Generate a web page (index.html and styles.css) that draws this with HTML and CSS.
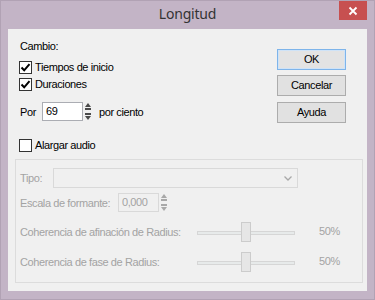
FILE: index.html
```html
<!DOCTYPE html>
<html lang="es">
<head>
<meta charset="utf-8">
<title>Longitud</title>
<link rel="stylesheet" href="styles.css">
</head>
<body>
<div class="window">
  <div class="titlebar">
    <span></span>
    <span class="title">Longitud</span>
    <div class="close">
      <svg width="10" height="10" viewBox="0 0 10 10"><path d="M1.5 1.5 L8.5 8.5 M8.5 1.5 L1.5 8.5" stroke="#fff" stroke-width="1.8" fill="none"/></svg>
    </div>
  </div>
  <div class="client">
    <div class="top">
      <div class="left">
        <div class="caption">Cambio:</div>
        <div class="check row1"><span class="box"><svg width="11" height="11" viewBox="0 0 11 11"><path d="M1.5 5.5 L4.2 8.3 L9.5 2.2" stroke="#000" stroke-width="2" fill="none"/></svg></span><span>Tiempos de inicio</span></div>
        <div class="check row2"><span class="box"><svg width="11" height="11" viewBox="0 0 11 11"><path d="M1.5 5.5 L4.2 8.3 L9.5 2.2" stroke="#000" stroke-width="2" fill="none"/></svg></span><span>Duraciones</span></div>
        <div class="por">
          <span class="por-label">Por</span>
          <span class="input">69</span>
          <span class="spin"><svg width="8" height="19" viewBox="0 0 8 19"><path d="M4 1 L7 5 L1 5 Z" fill="#4a4a4a"/><rect x="1" y="6" width="6" height="2" fill="#4a4a4a"/><rect x="1" y="11" width="6" height="2" fill="#4a4a4a"/><path d="M1 14 L7 14 L4 18 Z" fill="#4a4a4a"/></svg></span>
          <span class="por-suffix">por ciento</span>
        </div>
        <div class="check row3"><span class="box"></span><span>Alargar audio</span></div>
      </div>
      <div class="buttons">
        <div class="btn default">OK</div>
        <div class="btn">Cancelar</div>
        <div class="btn third">Ayuda</div>
      </div>
    </div>
    <div class="group">
      <div class="row tipo">
        <span class="lbl tipo-lbl">Tipo:</span>
        <span class="select"><svg width="8" height="5" viewBox="0 0 8 5"><path d="M0.5 0.5 L4 4 L7.5 0.5" stroke="#a8a8a8" stroke-width="1.3" fill="none"/></svg></span>
      </div>
      <div class="row escala">
        <span class="lbl escala-lbl">Escala de formante:</span>
        <span class="input disabled">0,000</span>
        <span class="spin"><svg width="8" height="19" viewBox="0 0 8 19"><path d="M4 1 L7 5 L1 5 Z" fill="#a8a8a8"/><rect x="1" y="6" width="6" height="2" fill="#a8a8a8"/><rect x="1" y="11" width="6" height="2" fill="#a8a8a8"/><path d="M1 14 L7 14 L4 18 Z" fill="#a8a8a8"/></svg></span>
      </div>
      <div class="row slider-row first">
        <span class="lbl">Coherencia de afinación de Radius:</span>
        <span class="slider"><span class="track"></span><span class="thumb"></span></span>
        <span class="pct">50%</span>
      </div>
      <div class="row slider-row">
        <span class="lbl">Coherencia de fase de Radius:</span>
        <span class="slider"><span class="track"></span><span class="thumb"></span></span>
        <span class="pct">50%</span>
      </div>
    </div>
  </div>
</div>
</body>
</html>
```
FILE: styles.css
```css
html, body {
  margin: 0;
  padding: 0;
}
body {
  width: 375px;
  height: 300px;
  overflow: hidden;
  font-family: "Liberation Sans", Arial, sans-serif;
  font-size: 11px;
  letter-spacing: -0.4px;
  color: #000;
}
.window {
  width: 375px;
  height: 300px;
  box-sizing: border-box;
  background: #c3b4c6;
  border: 1px solid #b1a2b4;
  display: flex;
  flex-direction: column;
}
.titlebar {
  height: 28px;
  display: grid;
  grid-template-columns: 1fr auto 1fr;
  align-items: start;
}
.title {
  font-family: "Noto Sans", "Open Sans", sans-serif;
  font-size: 14px;
  letter-spacing: -0.2px;
  color: #333;
  line-height: 20px;
  margin-top: 3px;
}
.close {
  justify-self: end;
  width: 28px;
  height: 19px;
  margin-right: 7px;
  background: #c75050;
  display: flex;
  align-items: center;
  justify-content: center;
}
.client {
  flex: 1;
  margin: 0 7px 8px 7px;
  background: #f0f0f0;
  display: flex;
  flex-direction: column;
}
.top {
  display: flex;
}
.left {
  flex: 1;
  padding-left: 11px;
}
.caption {
  margin-top: 11px;
  height: 13px;
  line-height: 13px;
  padding-left: 1px;
}
.check {
  display: flex;
  align-items: center;
  height: 13px;
  line-height: 13px;
  gap: 3px;
}
.row1 { margin-top: 8px; }
.row2 { margin-top: 4px; }
.row3 { margin-top: 18px; }
.box {
  width: 13px;
  height: 13px;
  box-sizing: border-box;
  border: 1px solid #333;
  background: #fff;
  display: flex;
  align-items: center;
  justify-content: center;
}
.por {
  margin-top: 11px;
  height: 19px;
  display: flex;
  align-items: center;
}
.por-label {
  width: 22px;
  padding-left: 1px;
}
.input {
  width: 41px;
  height: 19px;
  box-sizing: border-box;
  border: 1px solid #abadb3;
  background: #fff;
  padding-left: 3px;
  line-height: 16px;
}
.input.disabled {
  background: #f0f0f0;
  border-color: #d9d9d9;
  color: #a3a3a3;
}
.spin {
  width: 8px;
  height: 19px;
  margin-left: 1px;
  display: flex;
}
.por-suffix {
  margin-left: 7px;
}
.buttons {
  margin-right: 21px;
  padding-top: 20px;
  display: flex;
  flex-direction: column;
}
.btn {
  width: 69px;
  height: 21px;
  box-sizing: border-box;
  border: 1px solid #acacac;
  background: #e1e1e1;
  text-align: center;
  line-height: 19px;
  margin-bottom: 5px;
}
.btn.third {
  margin-top: 1px;
}
.btn.default {
  border-color: #7eb4ea;
  background: #e3e3e3;
  box-shadow: inset 0 0 0 1px #cfe3f7;
}
.group {
  height: 124px;
  box-sizing: border-box;
  margin: 7px 4px 8px 7px;
  border: 1px solid #dcdcdc;
  padding-left: 4px;
  color: #a3a3a3;
}
.row {
  display: flex;
  align-items: center;
}
.tipo {
  margin-top: 8px;
  height: 20px;
}
.tipo-lbl {
  width: 33px;
}
.select {
  width: 245px;
  height: 20px;
  box-sizing: border-box;
  border: 1px solid #d9d9d9;
  background: #f0f0f0;
  display: flex;
  align-items: center;
  justify-content: flex-end;
  padding-right: 5px;
}
.escala {
  margin-top: 5px;
  height: 19px;
}
.escala-lbl {
  width: 98px;
}
.slider-row {
  margin-top: 10px;
  height: 20px;
  display: grid;
  grid-template-columns: 177px 98px auto;
  align-items: center;
}
.slider-row .pct {
  margin-left: 24px;
  margin-top: -3px;
}
.slider {
  display: grid;
  height: 20px;
}
.track, .thumb {
  grid-area: 1 / 1;
}
.track {
  align-self: center;
  height: 4px;
  box-sizing: border-box;
  border: 1px solid #d6d6d6;
  background: #e7eaea;
  margin-top: 2px;
}
.thumb {
  justify-self: center;
  width: 10px;
  height: 20px;
  box-sizing: border-box;
  border: 1px solid #cccccc;
  background: #e6e6e6;
}
```
